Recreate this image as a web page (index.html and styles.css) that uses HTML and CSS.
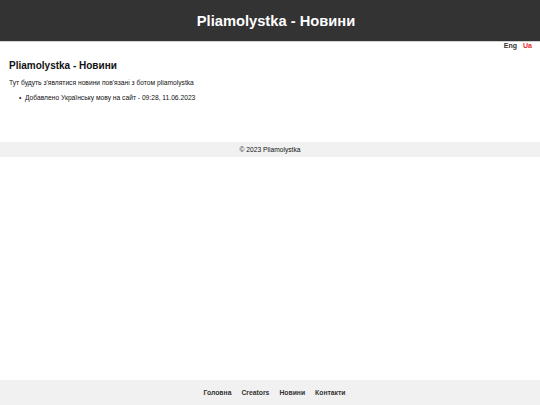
FILE: index.html
```html
<!DOCTYPE html>
<html lang="uk">
<head>
<meta charset="utf-8">
<title>Pliamolystka - Новини</title>
<link rel="stylesheet" href="styles.css">
</head>
<body>
<header class="site-header">
  <h1 class="site-title">Pliamolystka - Новини</h1>
</header>
<div class="lang">
  <a class="lang-link" href="#">Eng</a>
  <a class="lang-link active" href="#">Ua</a>
</div>
<main class="content">
  <h2 class="page-title">Pliamolystka - Новини</h2>
  <p class="intro">Тут будуть з'являтися новини пов'язані з ботом pliamolystka</p>
  <ul class="news">
    <li>Добавлено Українську мову на сайт - 09:28, 11.06.2023</li>
  </ul>
</main>
<footer class="copy">© 2023 Pliamolystka</footer>
<nav class="bottom-nav">
  <a href="#">Головна</a>
  <a href="#">Creators</a>
  <a href="#">Новини</a>
  <a href="#">Контакти</a>
</nav>
</body>
</html>
```

FILE: styles.css
```css
html, body {
  margin: 0;
  padding: 0;
}
body {
  font-family: "Liberation Sans", Arial, sans-serif;
  font-size: 6.7px;
  color: #111;
  background: #fff;
  min-height: 405px;
}
.site-header {
  background: #333333;
  height: 41px;
  border-bottom: 1px solid #d0d0d0;
  display: flex;
  align-items: center;
  justify-content: center;
  padding-left: 12px;
}
.site-title {
  margin: 0;
  color: #fff;
  font-size: 14.7px;
  font-weight: bold;
}
.lang {
  display: flex;
  justify-content: flex-end;
  gap: 6px;
  padding: 0 8px 0 0;
  height: 8px;
  line-height: 8px;
  font-size: 7px;
}
.lang-link {
  text-decoration: none;
  font-weight: bold;
  color: #333;
}
.lang-link.active {
  color: #e52b2b;
}
.content {
  padding: 0 9px;
}
.page-title {
  margin: 9px 0 0;
  font-size: 10px;
  line-height: 14px;
}
.intro {
  margin: 5px 0 0;
  line-height: 9px;
}
.news {
  margin: 6px 0 0;
  padding-left: 10px;
  list-style: none;
  line-height: 9px;
}
.news li::before {
  content: "•";
  display: inline-block;
  width: 6px;
}
.copy {
  margin-top: 40px;
  background: #f1f1f1;
  height: 15px;
  line-height: 15px;
  text-align: center;
}
.bottom-nav {
  position: fixed;
  left: 0;
  right: 0;
  bottom: 0;
  height: 25px;
  background: #f1f1f1;
  display: flex;
  justify-content: center;
  align-items: center;
  gap: 10px;
  padding-left: 9px;
  font-size: 6.8px;
}
.bottom-nav a {
  color: #333;
  font-weight: bold;
  text-decoration: none;
}
```
